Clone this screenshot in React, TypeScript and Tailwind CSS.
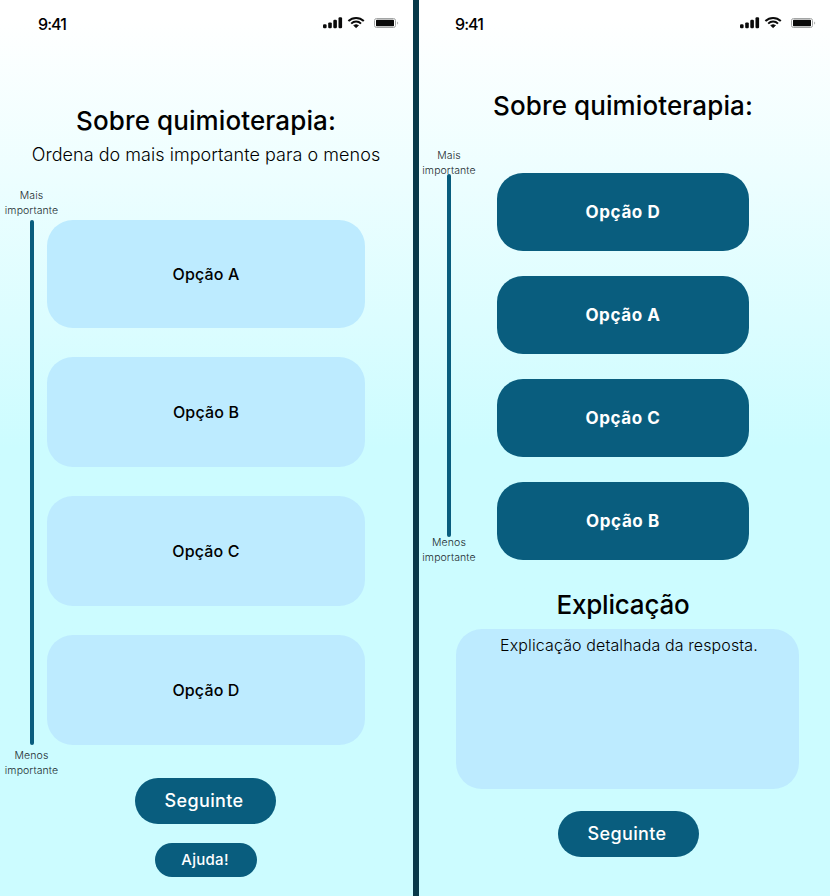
import type { ReactNode } from "react";

function StatusIcons() {
  return (
    <svg width="76" height="14" viewBox="0 0 76 14" fill="none">
      <g fill="#0a0a0a">
        <rect x="0" y="8.2" width="3.6" height="4" rx="1.2" />
        <rect x="5.2" y="6.4" width="3.6" height="5.8" rx="1.2" />
        <rect x="10.3" y="3.8" width="3.6" height="8.4" rx="1.2" />
        <rect x="15.5" y="1.2" width="3.6" height="11" rx="1.2" />
        <path d="M30.6 9.4 L33.1 8.4 L35.6 9.4 L33.1 11.8 Z" stroke="#0a0a0a" strokeWidth="0.6" strokeLinejoin="round" />
      </g>
      <g stroke="#0a0a0a" strokeWidth="2">
        <path d="M25.4 5 C29.8 .9 36.4 .9 40.8 5" />
        <path d="M28.2 7.6 C31 4.9 35.2 4.9 38 7.6" />
      </g>
      <rect x="51.5" y="2.5" width="21" height="9" rx="2" stroke="#a3a5a5" />
      <rect x="53" y="3.8" width="18" height="6.4" rx="0.6" fill="#0a0a0a" />
      <path d="M74.2 5.4 C75.5 5.9 75.5 8.1 74.2 8.6 Z" fill="#a3a5a5" />
    </svg>
  );
}

function StatusBar({ inset }: { inset: string }) {
  return (
    <header className={`flex h-12 items-start justify-between ${inset}`}>
      <span className="mt-[14px] text-[16px] leading-5 font-medium tracking-[-0.95px]">9:41</span>
      <div className="mt-4 mr-[14px]">
        <StatusIcons />
      </div>
    </header>
  );
}

function AxisLabel({ word }: { word: string }) {
  return (
    <p className="w-[63px] text-center text-[10.5px] leading-[15px] font-light tracking-[0.1px] text-[#1b2a2e]">
      {word}
      <br />
      importante
    </p>
  );
}

function LightOption({ name, height }: { name: string; height: string }) {
  return (
    <li className={`flex w-[318px] items-center justify-center rounded-[26px] bg-[#bdebff] text-[16px] font-medium tracking-[0.15px] ${height}`}>
      {name}
    </li>
  );
}

function DarkOption({ name }: { name: string }) {
  return (
    <li className="flex h-[78px] w-[252px] items-center justify-center rounded-[26px] bg-[#095d7e] pt-[2px] text-[17px] font-bold tracking-[0.6px] text-white">
      {name}
    </li>
  );
}

function NextButton() {
  return (
    <button className="flex h-[46px] w-[141px] items-center justify-center rounded-full bg-[#095d7e] pr-[3px] pb-[2px] text-[18px] font-medium tracking-[0.35px] text-white">
      Seguinte
    </button>
  );
}

function Title({ children, tracking }: { children: ReactNode; tracking: string }) {
  return <h1 className={`text-center text-[26px] leading-9 font-medium ${tracking}`}>{children}</h1>;
}

const screen = "h-full bg-linear-to-b from-white from-[2%] to-[#ccfcff] to-[50%]";

export default function App() {
  return (
    <main className="flex h-[896px] w-[830px] overflow-hidden bg-[#07394a] font-['Inter','Open_Sans',sans-serif] text-black">
      <section className={`${screen} w-[413px]`}>
        <StatusBar inset="pl-[38px]" />
        <div className="mt-[55px] pr-px">
          <Title tracking="tracking-[0.1px]">Sobre quimioterapia:</Title>
          <p className="mt-[4px] text-center text-[18px] leading-6 font-light tracking-[0.04px]">
            Ordena do mais importante para o menos
          </p>
        </div>
        <div className="mt-[21px]">
          <AxisLabel word="Mais" />
          <div className="mt-[2px] flex gap-[13px] pl-[30px]">
            <div className="w-1 rounded-full bg-[#095d7e]" />
            <ol className="flex flex-col gap-[29px]">
              <LightOption name="Opção A" height="h-[108px]" />
              <LightOption name="Opção B" height="h-[110px]" />
              <LightOption name="Opção C" height="h-[110px]" />
              <LightOption name="Opção D" height="h-[110px]" />
            </ol>
          </div>
          <div className="mt-[3px]">
            <AxisLabel word="Menos" />
          </div>
        </div>
        <div className="flex flex-col items-center gap-[19px] pr-[2px]">
          <NextButton />
          <button className="flex h-[34px] w-[102px] items-center justify-center rounded-full bg-[#095d7e] pr-px text-[15px] font-medium tracking-[0.3px] text-white">
            Ajuda!
          </button>
        </div>
      </section>

      <section className={`${screen} ml-[6px] w-[411px]`}>
        <StatusBar inset="pl-[36px]" />
        <div className="mt-[40px] pr-[3px]">
          <Title tracking="tracking-[0.1px]">Sobre quimioterapia:</Title>
        </div>
        <div className="mt-[24px] flex h-[417px]">
          <div className="flex w-[60px] flex-col items-center">
            <AxisLabel word="Mais" />
            <div className="-mt-1 -mb-[2px] w-1 flex-1 rounded-full bg-[#095d7e]" />
            <AxisLabel word="Menos" />
          </div>
          <ol className="mt-[25px] ml-[18px] flex flex-col gap-[25px]">
            <DarkOption name="Opção D" />
            <DarkOption name="Opção A" />
            <DarkOption name="Opção C" />
            <DarkOption name="Opção B" />
          </ol>
        </div>
        <div className="mt-[22px] pr-[3px]">
          <Title tracking="tracking-[-0.2px]">Explicação</Title>
        </div>
        <p className="mt-[6px] ml-[37px] h-[160px] w-[343px] rounded-[26px] bg-[#bdebff] pt-[4px] pl-[3px] text-center text-[16px] leading-6 font-light tracking-[0.12px]">
          Explicação detalhada da resposta.
        </p>
        <div className="mt-[22px] ml-[139px]">
          <NextButton />
        </div>
      </section>
    </main>
  );
}
